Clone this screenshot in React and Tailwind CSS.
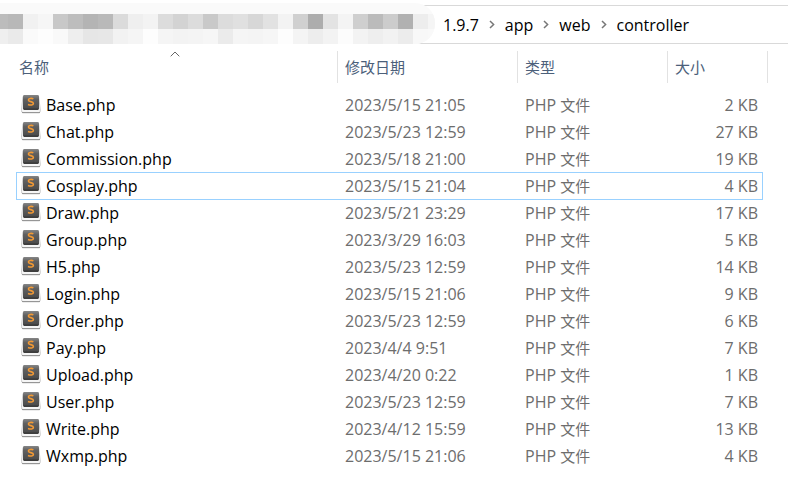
const TOP_TILES = [
  '#bcbcbc', '#b8b8b8', '#f1f1f1', '#f6f6f6', '#c8c8c8', '#bdbdbd', '#b4b4b4', '#b9b9b9', '#dbdbdb', '#efefef',
  '#f3f3f3', '#dcdcdc', '#d3d3d3', '#dcdcdc', '#c9c9c9', '#dcdcdc', '#e0e0e0', '#d7d7d7', '#e2e2e2', '#f3f3f3',
  '#d0d0d0', '#adadad', '#e3e3e3', '#f4f4f4', '#cfcfcf', '#bbbbbb', '#cccccc', '#b1b1b1', '#ededed', '#f5f5f5',
];

const BOTTOM_TILES = [
  '#efefef', '#eaeaea', '#fafafa', '#fdfdfd', '#f9f9f9', '#eeeeee', '#e6e6e6', '#e7e7e7', '#f2f2f2', '#f5f5f5',
  '#fdfdfd', '#f5f5f5', '#f3f3f3', '#f4f4f4', '#f6f6f6', '#ebebeb', '#f5f5f5', '#f4f4f4', '#f6f6f6', '#fdfdfd',
  '#f4f4f4', '#ededed', '#f3f3f3', '#fcfcfc', '#f3f3f3', '#eeeeee', '#f2f2f2', '#ececec', '#f8f8f8', '#f9f9f9',
];

const CRUMBS = ['1.9.7', 'app', 'web', 'controller'];

const FILES = [
  { name: 'Base.php', modified: '2023/5/15 21:05', size: '2 KB' },
  { name: 'Chat.php', modified: '2023/5/23 12:59', size: '27 KB' },
  { name: 'Commission.php', modified: '2023/5/18 21:00', size: '19 KB' },
  { name: 'Cosplay.php', modified: '2023/5/15 21:04', size: '4 KB', selected: true },
  { name: 'Draw.php', modified: '2023/5/21 23:29', size: '17 KB' },
  { name: 'Group.php', modified: '2023/3/29 16:03', size: '5 KB' },
  { name: 'H5.php', modified: '2023/5/23 12:59', size: '14 KB' },
  { name: 'Login.php', modified: '2023/5/15 21:06', size: '9 KB' },
  { name: 'Order.php', modified: '2023/5/23 12:59', size: '6 KB' },
  { name: 'Pay.php', modified: '2023/4/4 9:51', size: '7 KB' },
  { name: 'Upload.php', modified: '2023/4/20 0:22', size: '1 KB' },
  { name: 'User.php', modified: '2023/5/23 12:59', size: '7 KB' },
  { name: 'Write.php', modified: '2023/4/12 15:59', size: '13 KB' },
  { name: 'Wxmp.php', modified: '2023/5/15 21:06', size: '4 KB' },
];

function TileRow({ tiles }) {
  return (
    <div className="flex h-[15px] -ml-[7px]">
      {tiles.map((color, i) => (
        <span key={i} className="w-[15px] shrink-0" style={{ background: color }} />
      ))}
    </div>
  );
}

// Start of the path is masked out
function HiddenPath() {
  return (
    <div className="w-[435px] h-[41px] shrink-0 self-start -mt-[3px] pt-[11px] overflow-hidden rounded-r-[20px] bg-[#fafafa]">
      <TileRow tiles={TOP_TILES} />
      <TileRow tiles={BOTTOM_TILES} />
    </div>
  );
}

function Chevron() {
  return (
    <svg className="w-[6px] h-[9px] shrink-0" viewBox="0 0 6 9" fill="none" stroke="#777" strokeWidth="1.5" aria-hidden="true">
      <path d="M1 1l3.6 3.5L1 8" />
    </svg>
  );
}

function FileIcon() {
  return (
    <svg className="w-5 h-[19px] mt-[3px] shrink-0" viewBox="0 0 20 19" aria-hidden="true">
      <defs>
        <linearGradient id="keycap" x1="0" y1="0" x2="0" y2="1">
          <stop offset="0" stopColor="#868686" />
          <stop offset="0.3" stopColor="#606060" />
          <stop offset="1" stopColor="#484848" />
        </linearGradient>
      </defs>
      <path d="M2 1.5h15.6l1.8 14q0 2.2-1.8 2.2H2.2q-1.8 0-1.8-2.2z" fill="#f6f6f6" stroke="#c2c2c2" strokeWidth="0.8" />
      <path d="M1 17.6h18" stroke="#909090" strokeWidth="1" />
      <rect x="2" y="0" width="16" height="14.8" rx="1.4" fill="url(#keycap)" />
      <path d="M2.8 14.2h14.4" stroke="#303030" strokeWidth="1.2" />
      <path
        d="M12.4 3.9C10.6 3 7.4 3.2 7.4 5c0 2 5 1.2 5 3.4 0 1.8-3 2-5.4 1"
        fill="none"
        stroke="#f39a35"
        strokeWidth="1.6"
      />
    </svg>
  );
}

function HeaderCell({ label, className, sorted }) {
  return (
    <th scope="col" className={`relative h-8 p-0 font-normal text-left ${className}`}>
      {sorted && (
        <svg className="absolute top-0 left-1/2 -ml-[7px] w-[10px] h-[6px]" viewBox="0 0 10 6" fill="none" stroke="#666" aria-hidden="true">
          <path d="M.7 5.3L5 1l4.3 4.3" />
        </svg>
      )}
      <button type="button" className="block w-full h-8 text-left text-[15px] text-[#4c607a]">{label}</button>
    </th>
  );
}

function FileRow({ file }) {
  const edge = file.selected
    ? 'border-b border-[#99d1ff] shadow-[0_-1px_0_#99d1ff]'
    : 'border-b border-transparent';

  return (
    <tr className="text-[#6d6d6d] leading-[26px]">
      <td className={`h-[27px] p-0 pl-1 border-l ${edge}`}>
        <div className="flex items-start gap-[5px] h-[26px]">
          <FileIcon />
          <span className="text-black">{file.name}</span>
        </div>
      </td>
      <td className={`p-0 pl-[7px] ${edge}`}>{file.modified}</td>
      <td className={`p-0 pl-[7px] ${edge}`}>
        PHP <span className="text-[15px]">文件</span>
      </td>
      <td className={`p-0 pr-1 text-right border-r ${edge}`}>{file.size}</td>
    </tr>
  );
}

export default function App() {
  return (
    <div className="min-h-screen bg-white pt-[5px] text-base font-['Open_Sans','Noto_Sans_CJK_SC',sans-serif]">
      <nav aria-label="路径" className="flex items-center h-[39px] border-y border-[#d9d9d9] text-black">
        <HiddenPath />
        <ol className="flex items-center gap-[10px] pl-2">
          {CRUMBS.map((crumb, i) => (
            <li key={crumb} className="flex items-center gap-[10px]">
              {i > 0 && <Chevron />}
              <button type="button">{crumb}</button>
            </li>
          ))}
        </ol>
      </nav>

      <main className="pl-4 pr-5 pt-[7px]">
        <table className="w-full table-fixed border-separate border-spacing-0">
          <thead>
            <tr>
              <HeaderCell label="名称" className="pl-[3px] border-r border-[#e2e2e2]" sorted />
              <HeaderCell label="修改日期" className="w-[180px] pl-[7px] border-r border-[#e2e2e2]" />
              <HeaderCell label="类型" className="w-[150px] pl-[7px] border-r border-[#e2e2e2]" />
              <HeaderCell label="大小" className="w-[95px] pl-[7px]" />
              <td className="w-[5px] p-0 border-r border-[#e2e2e2]" />
            </tr>
          </thead>
          <tbody className="before:block before:h-[9px]">
            {FILES.map((file) => (
              <FileRow key={file.name} file={file} />
            ))}
          </tbody>
        </table>
      </main>
    </div>
  );
}
